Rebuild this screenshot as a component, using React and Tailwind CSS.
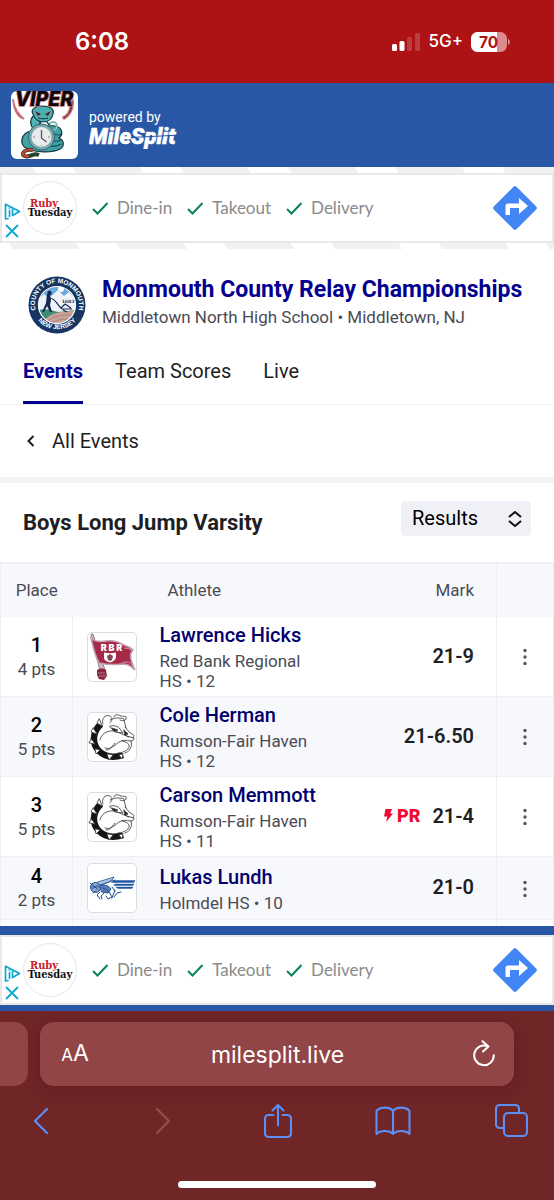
import React from "react";

const ROBOTO = "font-['Roboto','Liberation_Sans',sans-serif]";
const INTER = "font-['Inter','Liberation_Sans',sans-serif]";

function StatusBar() {
  return (
    <div className={`flex h-[83px] items-center justify-between bg-[#ad1315] pr-[43px] pl-[75px] text-white ${INTER}`}>
      <span className="text-2xl font-semibold">6:08</span>
      <div className="flex items-center gap-2">
        <svg width="28" height="18" viewBox="0 0 28 18" fill="#fff" aria-hidden="true">
          <rect x="0" y="11" width="5" height="7" rx="1.5" />
          <rect x="7.5" y="8" width="5" height="10" rx="1.5" />
          <rect x="15" y="4" width="5" height="14" rx="1.5" opacity=".18" />
          <rect x="23" y="0" width="5" height="18" rx="1.5" opacity=".18" />
        </svg>
        <span className="text-[17px] font-medium">5G+</span>
        <svg width="40" height="20" viewBox="0 0 40 20" aria-hidden="true">
          <defs>
            <clipPath id="cell"><rect width="36" height="20" rx="6.5" /></clipPath>
          </defs>
          <g clipPath="url(#cell)">
            <rect width="36" height="20" fill="#de8a8c" />
            <rect width="26" height="20" fill="#fff" />
          </g>
          <path d="M37 7c2.600 1 2.600 5 0 6z" fill="#de8a8c" />
          <text x="17.500" y="15.500" textAnchor="middle" fontFamily="Inter" fontWeight="700" fontSize="15.500" fill="#ad1315">70</text>
        </svg>
      </div>
    </div>
  );
}

function ViperLogo() {
  return (
    <svg width="67" height="68" viewBox="0 0 67 68" role="img" aria-label="Viper timing" className="rounded-md bg-white">
      <path d="M2 8c1 8 4 14 11 20-7-2-10-9-11-19zM62 9c1 9-3 16-9 19-2-1-1-3 1-3 4-3 6-8 5-15z" fill="#1a0e10" stroke="#c9737b" strokeWidth="1.600" />
      <g stroke="#14333a" strokeWidth="1.200">
        <path d="M20 40c-10 2-12 13-5 17 9 5 27 5 34 1 5-3 4-9-1-11 5-4 3-11-4-12-6-1-10 1-13 4z" fill="#3fa3a6" />
        <path d="M23 39c-5-6-4-11 0-15l12 2c-7 4-7 8-4 12z" fill="#4fb4b5" />
        <path d="M22 23c-3-5 3-8 9-8s13 2 11 8c-1 5-5 8-10 8-4 0-9-3-10-8z" fill="#4cb0b0" />
      </g>
      <path d="M24 20l6 3-3 2zM40 20l-6 3 3 2z" fill="#5b1c20" />
      <path d="M27 27c3 1 7 1 10 0" stroke="#14333a" fill="none" />
      <circle cx="42" cy="35" r="4" fill="none" stroke="#7fb9b8" strokeWidth="2" />
      <path d="M29 31l-1 5M36 31l3 4" stroke="#1d5b4c" strokeWidth="1.500" />
      <path d="M40 42c5 2 9 3 10 1M40 49c4 2 8 1 10 0M39 55c5 1 8 0 11-2" stroke="#14454a" fill="none" strokeWidth="1.200" />
      <circle cx="30.500" cy="46" r="13" fill="#7aa9ae" stroke="#35666d" />
      <circle cx="30.500" cy="46" r="10" fill="#e9eaec" />
      <path d="M30.500 39v8l5 4" stroke="#555" strokeWidth="1.300" fill="none" />
      <path d="M22 46h2M37 46h2M30.500 54v1" stroke="#888" />
      <path d="M22 59c-5-1-10 1-10 4 0 2 3 3 6 2 5-1 5-3 10-1" fill="none" stroke="#25422f" strokeWidth="4" />
      <path d="M22 59c-5-1-10 1-10 4 0 2 3 3 6 2" fill="none" stroke="#c9442f" strokeWidth="2.400" />
      <text x="33" y="15" textAnchor="middle" fontFamily="Inter" fontStyle="italic" fontWeight="800" fontSize="19.500" fill="#0c0809" stroke="#c9737b" strokeWidth="1.600" paintOrder="stroke">VIPER</text>
    </svg>
  );
}

function SiteHeader() {
  return (
    <header className={`flex h-[84px] items-center gap-[11px] bg-[#2857a6] pl-[11px] text-white ${ROBOTO}`}>
      <ViperLogo />
      <div className="pt-2">
        <div className="text-sm leading-4">powered by</div>
        <svg width="92" height="24" viewBox="0 0 92 24" role="img" aria-label="MileSplit">
          <text x="0" y="18.500" fontFamily="Roboto" fontStyle="italic" fontWeight="900" fontSize="22" fill="#fff" stroke="#fff" strokeWidth=".5">MileSplit</text>
          <path d="M42 12.500L92 10" stroke="#2857a6" strokeWidth="1.200" />
        </svg>
      </div>
    </header>
  );
}

function Check() {
  return (
    <svg width="16" height="16" viewBox="0 0 16 16" fill="none" stroke="#0b8457" strokeWidth="2" aria-hidden="true">
      <path d="M1 9l4.500 4.500L15.500 3" />
    </svg>
  );
}

function Ad() {
  return (
    <aside className="flex h-[70px] items-center border-2 border-[#e9e9e9] bg-white pr-[13px] font-['Lato','Liberation_Sans',sans-serif]">
      <div className="flex w-5 flex-col items-center gap-1 self-end pb-[3px]">
        <button type="button" aria-label="Ad choices">
          <svg width="17" height="17" viewBox="0 0 17 17" fill="none" stroke="#0ea5cf" strokeWidth="1.700" strokeLinejoin="round" strokeLinecap="round">
            <path d="M4 15.500l-2.500.500V1.200L15.500 8.500 8.500 12.500V6.500" />
            <path d="M5.500 7.800v5.500" />
            <circle cx="5.500" cy="5.300" r=".3" />
          </svg>
        </button>
        <button type="button" aria-label="Close ad">
          <svg width="14" height="14" viewBox="0 0 14 14" stroke="#0ea5cf" strokeWidth="1.800"><path d="M1 1l12 12M13 1L1 13" /></svg>
        </button>
      </div>
      <div className="ml-px flex size-[54px] shrink-0 flex-col items-center justify-center rounded-full border border-[#e6e6e6] font-['DejaVu_Serif_Condensed','DejaVu_Serif','Liberation_Serif',serif] text-[11px] leading-[9px] font-bold">
        <span className="pr-3 text-[#c8202f]">Ruby</span>
        <span className="text-[#111]">Tuesday</span>
      </div>
      <ul className="ml-[15px] flex flex-1 gap-[15px] text-[17px] text-[#8a8a8a]">
        {["Dine-in", "Takeout", "Delivery"].map((t) => (
          <li key={t} className="flex items-center gap-[9px]"><Check />{t}</li>
        ))}
      </ul>
      <a href="#directions" aria-label="Directions">
        <svg width="48" height="48" viewBox="0 0 48 48">
          <rect x="8" y="8" width="32" height="32" rx="2" fill="#4285f4" transform="rotate(45 24 24)" />
          <path d="M14.500 31V22q0-2.500 2.500-2.500h11v-5.500l9 8-9 8v-6h-9v7z" fill="#fff" />
        </svg>
      </a>
    </aside>
  );
}

function CountySeal() {
  return (
    <svg width="58" height="58" viewBox="0 0 58 58" role="img" aria-label="County of Monmouth, New Jersey">
      <defs>
        <path id="sealTop" d="M8.700 37.500A22 22 0 1 1 49.300 37.500" />
        <path id="sealBottom" d="M9 43.500A25.500 25.500 0 0 0 49 43.500" />
        <clipPath id="sealInner"><circle cx="29" cy="29" r="18.500" /></clipPath>
      </defs>
      <circle cx="29" cy="29" r="28.500" fill="#183561" />
      <g clipPath="url(#sealInner)">
        <rect width="58" height="58" fill="#6ea9dd" />
        <path d="M8 27l8-9 5 4 9-8 6 6 5-4 9 10v12H8z" fill="#eef4fa" />
        <circle cx="33" cy="13" r="3" fill="#fff" />
        <path d="M8 35c10-4 16 0 22 1l18-2v16H8z" fill="#3f8a72" />
        <path d="M14 50c4-12 14-15 36-15v20H14z" fill="#c8a197" />
        <path d="M17 48c6-8 14-9 30-9M22 49c6-6 12-6 22-6" stroke="#a97c72" fill="none" strokeWidth=".8" />
        <path d="M19 18l3 1 1 5-1 5 2 7h-2l-3-6-3 6h-2l4-9z" fill="#14294d" />
        <circle cx="21.500" cy="17" r="2.200" fill="#14294d" />
        <path d="M22 22c6 1 8 8 12 11h10M33 32l4-4 6 4M35 34l4 2" stroke="#14294d" strokeWidth="1.200" fill="none" />
      </g>
      <circle cx="29" cy="29" r="18.500" fill="none" stroke="#fff" strokeWidth="1.200" />
      <text x="40" y="27" textAnchor="middle" fontFamily="DejaVu Serif" fontWeight="700" fontSize="4.500" fill="#14294d">1683</text>
      <g fontFamily="Liberation Sans" fontWeight="700" fontSize="6.500" fill="#fff">
        <text textAnchor="middle"><textPath href="#sealTop" startOffset="50%">COUNTY OF MONMOUTH</textPath></text>
        <text textAnchor="middle"><textPath href="#sealBottom" startOffset="50%">NEW JERSEY</textPath></text>
      </g>
    </svg>
  );
}

function FlagLogo() {
  return (
    <svg width="48" height="48" viewBox="0 0 48 48" role="img" aria-label="Red Bank Regional">
      <path d="M3 1l2 0 12 36-5 1z" fill="#c9b9c6" stroke="#8c6c80" strokeWidth=".8" />
      <path d="M3 5c4 4 9 4 15 3 7-1 13 1 18 4 3 1 6 2 9 5-4 4-3 9 2 20-6-6-9-6-14-6-7 1-12 1-22-1C7 23 5 14 3 5z" fill="#a62a46" stroke="#c5a0b4" strokeWidth="1.600" />
      <path d="M36 15c4 0 6 1 8 3M34 30c5-2 8-1 11 3" stroke="#c5a0b4" fill="none" />
      <path d="M9 37c3-2 7-2 9 0l1 6-3 4-5-1-2-4z" fill="#8d2540" />
      <path d="M10 40h7M11 43h7" stroke="#c5a0b4" strokeWidth=".7" />
      <text x="23.500" y="18" textAnchor="middle" fontFamily="Inter" fontWeight="900" fontSize="9" fill="#fff">R B R</text>
      <path d="M16 19.500c4 1 8 1 12 0v5c-1 3-3 4-6 5-3-1-6-2-6-5z" fill="#fff" />
      <path d="M22 21l3 2-1 4-2 1-2-1-1-4z" fill="#8a4555" />
    </svg>
  );
}

function BulldogLogo() {
  return (
    <svg width="48" height="48" viewBox="0 0 48 48" role="img" aria-label="Rumson-Fair Haven" fill="none" stroke="#333" strokeWidth=".8" strokeLinejoin="round" strokeLinecap="round">
      <path d="M13 11C4 19 4 31 11 38c6 6 15 7 24 4" stroke="#151515" strokeWidth="6.500" strokeLinecap="butt" />
      <path d="M17 10c-6 12-6 19 0 25 5 5 14 6 19 4 6-3 7-8 6-14 2-1 5-2 4-4-1-4-5-6-9-8l-1-7-12-3-7 3z" fill="#fff" stroke="none" />
      <path d="M15 11c-2-5 2-10 7-8 3 2 2 5 0 7M22 7c4-2 9-3 14-1M26 4c1-4 5-2 7-1 4 1 6-1 5 3-1 2-4 2-6 1M36 7l2 8" />
      <path d="M12 27c1-6 7-10 15-9 5 2 8 4 12 5l7 2c0 2-1 3-3 3-5-1-9-1-12 1-5 4-9 8-14 6M27 30c-4 5-5 7-9 7M34 28c6 1 9 4 6 8-2 2-6 4-10 4M43 28c2 6-2 11-6 12" />
      <path d="M22 13c4-1 8 0 10 3l3 4-8-1zM37 14l5 6c4 1 5 3 3 5M39 20c-2 2-1 4 2 4" />
      <path d="M24 15l6 2-4 1zM36 17l4 4-3 1z" fill="#222" />
      <g fill="#fff">
        <path d="M11 6l-2 4 5 3zM5 15l-2 4 6 2zM3 26l-2 4 6 1zM7 36l1 5 4-4zM19 41l2 6 4-5zM31 42l3 4 1-5z" />
      </g>
    </svg>
  );
}

function HornetLogo() {
  return (
    <svg width="48" height="48" viewBox="0 0 48 48" role="img" aria-label="Holmdel" fill="none" stroke="#1d4c94" strokeWidth="1" strokeLinecap="round">
      <path d="M25 16.500h22l-1 2H24zM27 20h19l-1 1.500H26zM28 23h17l-1 1.500H30z" fill="#1d56a8" strokeWidth=".4" />
      <path d="M10 18c6-2 10-3 16-5l-2 3c-6 3-8 4-13 5zM13 21l14-5" fill="#b7c9e4" strokeWidth=".8" />
      <circle cx="7.500" cy="23.500" r="5" fill="#8fa9d0" />
      <path d="M4 20l6 6M4 25l6-4M2 19l2 2M5 29l3-2M3 23h8" strokeWidth=".8" />
      <path d="M12 22c3-2 8-1 11 3l-3 4-6-1z" fill="#5c80ba" />
      <path d="M12 28l-3 3 3 4M16 29l-3 3 1 3M21 28l3 5-4 2-2-3M26 33l3-4 4-1M15 24l5 3M24 23l3 4M27 26l-3 8" />
    </svg>
  );
}

const results = [
  { place: 1, pts: 4, name: "Lawrence Hicks", school: "Red Bank Regional HS • 12", mark: "21-9", Logo: FlagLogo },
  { place: 2, pts: 5, name: "Cole Herman", school: "Rumson-Fair Haven HS • 12", mark: "21-6.50", Logo: BulldogLogo },
  { place: 3, pts: 5, name: "Carson Memmott", school: "Rumson-Fair Haven HS • 11", mark: "21-4", pr: true, Logo: BulldogLogo },
  { place: 4, pts: 2, name: "Lukas Lundh", school: "Holmdel HS • 10", mark: "21-0", Logo: HornetLogo },
];

function ResultRow({ place, pts, name, school, mark, pr, Logo }) {
  return (
    <tr className="border-b border-[#eff0f3] even:bg-[#f7f8fc]">
      <td className="border-r border-[#eff0f3] p-0 text-center">
        <div className="text-xl leading-6 font-medium text-black">{place}</div>
        <div className="text-[17px] leading-6 text-[#4a4b54]">{pts} pts</div>
      </td>
      <td className="py-1.5 pl-[14px]">
        <div className="flex size-[50px] items-center justify-center rounded-[5px] border border-[#dddde1] bg-white">
          <Logo />
        </div>
      </td>
      <td className="py-[5px]">
        <a href="#athlete" className="block text-xl leading-[27px] font-medium whitespace-nowrap text-[#02006c]">{name}</a>
        <div className="mt-0.5 text-[17px] leading-5 text-[#4a4b54]">{school}</div>
      </td>
      <td className="pr-[22px] pb-0.5">
        <div className="flex items-center justify-end gap-3">
          {pr && (
            <span className="flex items-center gap-1 text-lg font-black text-[#ee0a30]">
              <svg width="9" height="13" viewBox="0 0 9 13" fill="currentColor" aria-hidden="true"><path d="M1.500 0H8L6.200 4.500H9L2.200 13l1-5.500H0z" /></svg>
              PR
            </span>
          )}
          <span className="text-xl font-semibold text-[#1e1f24]">{mark}</span>
        </div>
      </td>
      <td className="border-x border-[#eff0f3] text-center">
        <button type="button" aria-label={`More about ${name}`} className="align-middle">
          <svg width="20" height="20" viewBox="0 0 20 20" fill="#55565c"><circle cx="10" cy="3.500" r="1.700" /><circle cx="10" cy="10" r="1.700" /><circle cx="10" cy="16.500" r="1.700" /></svg>
        </button>
      </td>
    </tr>
  );
}

function Results() {
  return (
    <table className="w-full table-fixed border-collapse border-l border-[#eff0f3]">
      <colgroup>
        <col className="w-[72px]" />
        <col className="w-[87px]" />
        <col className="w-[162px]" />
        <col />
        <col className="w-[57px]" />
      </colgroup>
      <thead className="border-t-2 border-[#eff0f3] bg-[#f7f8fc] text-[17px] text-[#4a4b54]">
        <tr className="h-[54px]">
          <th scope="col" className="font-normal">Place</th>
          <th scope="col" colSpan={2} className="pl-[95px] text-left font-normal">Athlete</th>
          <th scope="col" className="pr-[22px] text-right font-normal">Mark</th>
          <td className="border-x border-[#eff0f3]" />
        </tr>
      </thead>
      <tbody>
        {results.map((r) => <ResultRow key={r.place} {...r} />)}
        <tr className="h-1.5">
          <td className="border-r border-[#eff0f3] p-0" />
          <td colSpan={3} className="p-0" />
          <td className="border-x border-[#eff0f3] p-0" />
        </tr>
      </tbody>
    </table>
  );
}

function Meet() {
  return (
    <main className={`bg-white text-[#1e1f24] ${ROBOTO}`}>
      <div className="flex items-center gap-4 pt-[27px] pl-7">
        <CountySeal />
        <div className="pb-1">
          <h1 className="text-[23px] leading-7 font-bold text-[#03008f]">Monmouth County Relay Championships</h1>
          <p className="text-[17px] leading-[26px] text-[#4a4b54]">Middletown North High School • Middletown, NJ</p>
        </div>
      </div>
      <nav className="mt-[7px] flex gap-8 border-b border-[#eff0f3] pl-[23px] text-xl leading-[60px]">
        <a href="#events" className="border-b-3 border-[#03008f] font-bold text-[#03008f]">Events</a>
        <a href="#scores">Team Scores</a>
        <a href="#live">Live</a>
      </nav>
      <a href="#all" className="flex h-[72px] items-center gap-4 pl-[26px] text-xl">
        <svg width="10" height="12" viewBox="0 0 10 12" fill="none" stroke="#1e1f24" strokeWidth="2" aria-hidden="true"><path d="M7.500 1l-5 5 5 5" /></svg>
        All Events
      </a>
      <div className="flex h-[85px] items-center justify-between border-t-6 border-[#f3f3f5] pr-[23px] pl-[23px]">
        <h2 className="text-[22px] font-bold">Boys Long Jump Varsity</h2>
        <div className="relative mb-2 flex items-center">
          <select aria-label="View" className="h-[35px] w-[130px] appearance-none rounded bg-[#f0f0f7] pb-0.5 pl-[11px] text-xl leading-7 text-black">
            <option>Results</option>
          </select>
          <svg className="pointer-events-none absolute right-[9px]" width="14" height="16" viewBox="0 0 14 16" fill="none" stroke="#111" strokeWidth="2" strokeLinejoin="round" aria-hidden="true">
            <path d="M1 6l6-5 6 5M1 10l6 5 6-5" />
          </svg>
        </div>
      </div>
      <Results />
    </main>
  );
}

function BrowserChrome() {
  return (
    <footer className={`flex h-[189px] flex-col bg-[#702527] pt-[11px] text-white ${INTER}`}>
      <div className="flex h-16 gap-3 pr-10">
        <div className="w-7 shrink-0 rounded-r-[14px] bg-[#914546]" />
        <div className="flex min-w-0 flex-1 items-center rounded-[14px] bg-[#914546] pr-[18px] pl-[21px] shadow-[0_4px_16px_rgba(60,10,10,0.2)]">
          <button type="button" aria-label="Page settings" className="w-7 text-[23px] whitespace-nowrap"><span className="text-[17px]">A</span>A</button>
          <input aria-label="Address" defaultValue="milesplit.live" className="min-w-0 flex-1 bg-transparent pt-1 pr-1.5 text-center text-[23px] outline-none" />
          <button type="button" aria-label="Reload">
            <svg width="24" height="28" viewBox="0 0 24 28" fill="none" stroke="#fff" strokeWidth="2" strokeLinecap="round" strokeLinejoin="round">
              <path d="M15.500 6.200A9.800 9.800 0 1 0 21.800 15.300M10.500 1.200l6 5.300-5.500 5" />
            </svg>
          </button>
        </div>
      </div>
      <div className="mt-[17px] flex h-9 items-center justify-between pr-[26px] pl-8 text-[#5b8ff5]">
        <button type="button" aria-label="Back">
          <svg width="18" height="28" viewBox="0 0 18 28" fill="none" stroke="currentColor" strokeWidth="2.200" strokeLinecap="round" strokeLinejoin="round"><path d="M15 2L3 14l12 12" /></svg>
        </button>
        <button type="button" aria-label="Forward" disabled className="pl-5 text-[#914f50]">
          <svg width="18" height="28" viewBox="0 0 18 28" fill="none" stroke="currentColor" strokeWidth="2.200" strokeLinecap="round" strokeLinejoin="round"><path d="M3 2l12 12L3 26" /></svg>
        </button>
        <button type="button" aria-label="Share" className="pl-2">
          <svg width="28" height="36" viewBox="0 0 28 36" fill="none" stroke="currentColor" strokeWidth="2.100" strokeLinecap="round" strokeLinejoin="round">
            <path d="M9.500 12H5q-4 0-4 4v14q0 4 4 4h18q4 0 4-4V16q0-4-4-4h-4.500M14 22.500V2M8.500 7.500L14 2l5.500 5.500" />
          </svg>
        </button>
        <button type="button" aria-label="Bookmarks">
          <svg width="36" height="30" viewBox="0 0 36 30" fill="none" stroke="currentColor" strokeWidth="2.100" strokeLinecap="round" strokeLinejoin="round">
            <path d="M18 5C15 .500 5 .500 1.500 5v23c4-4 12.500-4 16.500 0 4-4 12.500-4 16.500 0V5C31 .500 21 .500 18 5zM18 5v23" />
          </svg>
        </button>
        <button type="button" aria-label="Tabs">
          <svg width="33" height="33" viewBox="0 0 33 33" fill="none" stroke="currentColor" strokeWidth="2.100" strokeLinejoin="round">
            <rect x="9" y="9" width="23" height="23" rx="4" />
            <path d="M9 24H5q-4 0-4-4V5q0-4 4-4h15q4 0 4 4v4" />
          </svg>
        </button>
      </div>
      <div className="mx-auto mt-auto mb-3 h-[7px] w-[198px] rounded-full bg-white" />
    </footer>
  );
}

export default function App() {
  return (
    <div className="flex flex-col">
      <StatusBar />
      <SiteHeader />
      <div className="bg-[repeating-linear-gradient(60deg,#fff_0_11px,#f1f1f1_11px_69px,#fff_69px_93px)] pt-1.5 pb-1.5">
        <Ad />
      </div>
      <Meet />
      <div className="bg-[#2857a6] pt-[9px] pb-1.5">
        <Ad />
      </div>
      <BrowserChrome />
    </div>
  );
}
